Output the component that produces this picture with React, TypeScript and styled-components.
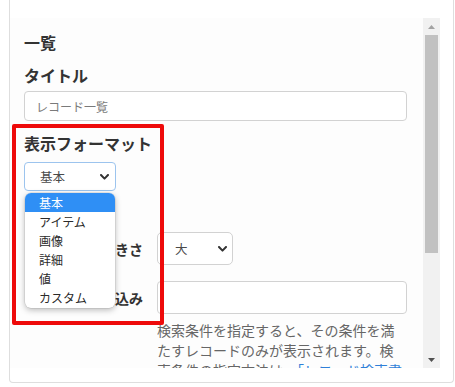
import React from "react";
import styled, { createGlobalStyle } from "styled-components";

const GlobalStyle = createGlobalStyle`
  html, body { margin: 0; padding: 0; background: #ffffff; }
  body {
    font-family: "Noto Sans CJK JP", "Noto Sans", sans-serif;
    color: #333333;
  }
  * { box-sizing: border-box; }
`;

const Page = styled.div`
  position: relative;
  width: 455px;
  height: 387px;
  overflow: hidden;
`;

const Panel = styled.div`
  margin-left: 9px;
  width: 445px;
  height: 383px;
  padding: 18px 13px 14px 0;
  border: 1px solid #dedede;
  border-top: none;
  border-radius: 0 0 4px 4px;
  display: flex;
  background: #ffffff;
`;

const Content = styled.div`
  flex: 1;
  overflow: hidden;
  padding: 12px 16px 0 14px;
  background: #fdfdfd;
`;

const Heading = styled.h2`
  margin: 0;
  font-size: 16px;
  line-height: 24px;
  font-weight: 700;
  color: #333;
`;

const FieldLabel = styled.h3<{ $gap: number }>`
  margin: ${(p) => p.$gap}px 0 0;
  font-size: 16px;
  line-height: 24px;
  font-weight: 700;
  color: #333;
`;

const TextInput = styled.input<{ $h: number; $gap: number }>`
  display: block;
  width: 100%;
  height: ${(p) => p.$h}px;
  margin-top: ${(p) => p.$gap}px;
  padding: 0 11px;
  border: 1px solid #d2d2d2;
  border-radius: 4px;
  background: #ffffff;
  font-family: "Noto Sans CJK JP", sans-serif;
  font-size: 12px;
  color: #333;
  outline: none;
  &::placeholder { color: #7a7a7a; }
`;

const SelectBox = styled.div<{ $w: number; $h: number; $pl: number; $focus?: boolean }>`
  position: relative;
  width: ${(p) => p.$w}px;
  height: ${(p) => p.$h}px;
  padding: 0 ${(p) => (p.$focus ? 6 : 5)}px 0 ${(p) => p.$pl}px;
  display: flex;
  align-items: center;
  justify-content: space-between;
  border: 1px solid ${(p) => (p.$focus ? "#9cc4ee" : "#d2d2d2")};
  border-radius: ${(p) => (p.$focus ? 4 : 5)}px;
  background: #ffffff;
  font-size: 12.5px;
  color: #4a4a4a;
`;

const FormatSelectWrap = styled.div`
  margin-top: 7px;
`;

const Chevron = () => (
  <svg width="9" height="6" viewBox="0 0 9 6">
    <polyline points="1,1 4.5,4.6 8,1" fill="none" stroke="#333" strokeWidth="2" strokeLinecap="round" strokeLinejoin="round" />
  </svg>
);

const Dropdown = styled.ul`
  position: absolute;
  left: 0;
  top: 30px;
  width: 90px;
  margin: 0;
  padding: 0 0 1px;
  list-style: none;
  background: #ffffff;
  border-radius: 6px;
  overflow: hidden;
  box-shadow: 0 2px 6px rgba(0, 0, 0, 0.28), 0 0 0 0.5px rgba(0, 0, 0, 0.12);
  z-index: 2;
`;

const Option = styled.li<{ $selected?: boolean }>`
  height: 19px;
  line-height: 19px;
  padding-left: 14px;
  font-size: 12px;
  color: ${(p) => (p.$selected ? "#ffffff" : "#2a2a2a")};
  background: ${(p) => (p.$selected ? "#2f8ff5" : "transparent")};
`;

const FormRow = styled.div<{ $gap: number }>`
  display: grid;
  grid-template-columns: 133px 1fr;
  align-items: center;
  margin-top: ${(p) => p.$gap}px;
`;

const RowLabel = styled.div`
  padding-right: 14px;
  text-align: right;
  font-size: 14px;
  font-weight: 700;
  line-height: 20px;
  color: #333;
  white-space: nowrap;
`;

const Help = styled.p`
  grid-column: 2;
  margin: 6px 0 0;
  font-size: 14px;
  line-height: 20px;
  color: #666;
`;

const HelpLink = styled.a`
  color: #2f7fd8;
  text-decoration: none;
`;

const Scrollbar = styled.div`
  width: 17px;
  display: flex;
  flex-direction: column;
  background: #f1f1f1;
`;

const ScrollButton = styled.div`
  height: 17px;
  display: flex;
  align-items: center;
  justify-content: center;
`;

const Thumb = styled.div`
  height: 218px;
  margin: 0 2px;
  background: #c1c1c1;
`;

const Track = styled.div`
  flex: 1;
`;

const Annotation = styled.div`
  position: absolute;
  left: 12px;
  top: 124px;
  width: 152px;
  height: 201px;
  border: 4px solid #ee0a0a;
  border-radius: 2px;
  pointer-events: none;
  z-index: 3;
`;

const options = ["基本", "アイテム", "画像", "詳細", "値", "カスタム"];

export default function App() {
  return (
    <Page>
      <GlobalStyle />
      <Panel>
        <Content>
          <Heading>一覧</Heading>
          <FieldLabel $gap={9}>タイトル</FieldLabel>
          <TextInput $h={30} $gap={4} placeholder="レコード一覧" readOnly />
          <FieldLabel $gap={10}>表示フォーマット</FieldLabel>
          <FormatSelectWrap>
            <SelectBox $w={92} $h={29} $pl={15} $focus>
              <span>基本</span>
              <Chevron />
              <Dropdown>
                {options.map((o, i) => (
                  <Option key={o} $selected={i === 0}>
                    {o}
                  </Option>
                ))}
              </Dropdown>
            </SelectBox>
          </FormatSelectWrap>
          <FormRow $gap={41}>
            <RowLabel>表示する大きさ</RowLabel>
            <SelectBox $w={76} $h={33} $pl={17}>
              <span>大</span>
              <Chevron />
            </SelectBox>
          </FormRow>
          <FormRow $gap={16}>
            <RowLabel>条件で絞り込み</RowLabel>
            <TextInput $h={33} $gap={0} readOnly />
            <Help>
              検索条件を指定すると、その条件を満たすレコードのみが表示されます。検索条件の指定方法は、
              <HelpLink href="#">「レコード検索書式」</HelpLink>
              を参照してください。
            </Help>
          </FormRow>
        </Content>
        <Scrollbar>
          <ScrollButton>
            <svg width="7" height="4" viewBox="0 0 7 4">
              <polygon points="0,4 3.5,0 7,4" fill="#a3a3a3" />
            </svg>
          </ScrollButton>
          <Thumb />
          <Track />
          <ScrollButton>
            <svg width="7" height="4" viewBox="0 0 7 4">
              <polygon points="0,0 7,0 3.5,4" fill="#505050" />
            </svg>
          </ScrollButton>
        </Scrollbar>
      </Panel>
      <Annotation />
    </Page>
  );
}
